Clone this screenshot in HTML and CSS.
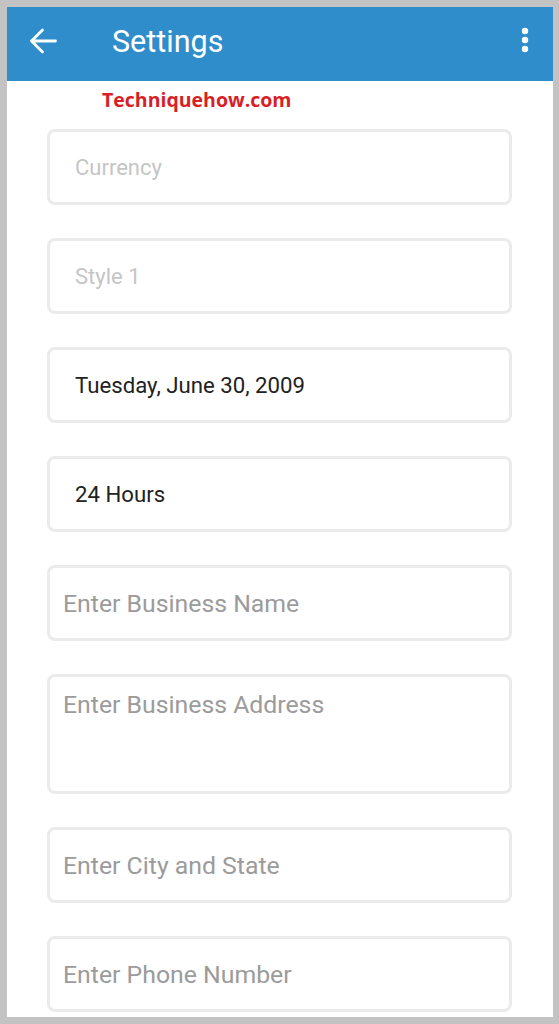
FILE: index.html
```html
<!DOCTYPE html>
<html lang="en">
<head>
<meta charset="utf-8">
<title>Settings</title>
<link rel="stylesheet" href="styles.css">
</head>
<body>
<div class="frame">
  <header class="appbar">
    <svg class="back" width="28" height="26" viewBox="0 0 28 26"><path d="M26.5 13H2.5M13.5 2L2.5 13l11 11" fill="none" stroke="#fff" stroke-width="2.8" stroke-linecap="round" stroke-linejoin="round"/></svg>
    <h1 class="title">Settings</h1>
    <svg class="menu" width="10" height="28" viewBox="0 0 10 28"><circle cx="5" cy="5" r="3.2" fill="#fff"/><circle cx="5" cy="14" r="3.2" fill="#fff"/><circle cx="5" cy="23" r="3.2" fill="#fff"/></svg>
  </header>
  <main class="content">
    <div class="watermark">Techniquehow.com</div>
    <div class="fields">
      <div class="field picker"><span class="hint">Currency</span></div>
      <div class="field picker"><span class="hint">Style 1</span></div>
      <div class="field picker"><span class="value">Tuesday, June 30, 2009</span></div>
      <div class="field picker"><span class="value">24 Hours</span></div>
      <div class="field input"><span class="placeholder">Enter Business Name</span></div>
      <div class="field input tall"><span class="placeholder">Enter Business Address</span></div>
      <div class="field input"><span class="placeholder">Enter City and State</span></div>
      <div class="field input"><span class="placeholder">Enter Phone Number</span></div>
    </div>
  </main>
</div>
</body>
</html>
```

FILE: styles.css
```css
html, body {
  margin: 0;
  padding: 0;
}
body {
  background: #c3c3c3;
  font-family: Roboto, "Liberation Sans", sans-serif;
}
.frame {
  box-sizing: border-box;
  width: 559px;
  height: 1024px;
  border-style: solid;
  border-color: #c3c3c3;
  border-width: 7px 6px 7px 7px;
  background: #fafafa;
  overflow: hidden;
  display: flex;
  flex-direction: column;
}
.appbar {
  flex: 0 0 74px;
  background: #2f8dcc;
  display: flex;
  align-items: center;
  padding: 0 23px 0 22px;
  color: #fff;
}
.back {
  flex: 0 0 auto;
  margin-top: -6px;
}
.title {
  flex: 1;
  margin: -6px 0 0 55px;
  font-size: 30.5px;
  font-weight: 400;
}
.menu {
  flex: 0 0 auto;
  margin-top: -8px;
}
.content {
  flex: 1;
  background: #fff;
  padding: 0 41px 0 40px;
  overflow: hidden;
}
.watermark {
  height: 48px;
  padding-left: 55px;
  box-sizing: border-box;
  padding-top: 5px;
  font-family: "Open Sans", sans-serif;
  font-weight: 700;
  font-size: 19.5px;
  color: #d81e26;
}
.fields {
  display: flex;
  flex-direction: column;
  gap: 33px;
}
.field {
  box-sizing: border-box;
  height: 76px;
  border: 3px solid #ebebeb;
  border-radius: 8px;
  display: flex;
  align-items: center;
  flex: 0 0 auto;
}
.picker {
  padding-left: 25px;
}
.input {
  padding-left: 13px;
  font-size: 24.8px;
}
.tall {
  height: 120px;
  align-items: flex-start;
  padding-top: 13px;
}
.hint {
  color: #c5c5c5;
  font-size: 22px;
}
.value {
  color: #222;
  font-size: 22.2px;
}
.placeholder {
  color: #9b9b9b;
}
```
